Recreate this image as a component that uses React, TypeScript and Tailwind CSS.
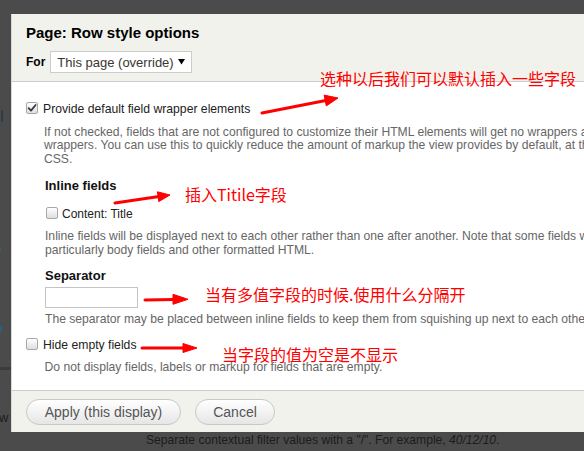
import React from "react";

function Checkbox({ checked }: { checked?: boolean }) {
  return (
    <div className="w-[12px] h-[12px] shrink-0 rounded-[2px] border border-[#a8a8a8] bg-gradient-to-b from-[#ffffff] to-[#dedede] flex items-center justify-center">
      {checked && (
        <svg width="10" height="10" viewBox="0 0 10 10">
          <path d="M1.6 5.2 L4 7.6 L8.6 2" fill="none" stroke="#3a3a3a" strokeWidth="1.8" strokeLinecap="round" strokeLinejoin="round" />
        </svg>
      )}
    </div>
  );
}

export default function App() {
  return (
    <div className="relative w-[584px] h-[451px] overflow-hidden bg-[#4b4b4b] font-['Liberation_Sans',Arial,sans-serif]">
      {/* background page fragments */}
      <div className="absolute left-[1px] top-[110px] w-[2px] h-[12px] bg-[#2e3a44]" />
      <div className="absolute left-0 top-[248px] w-[1px] h-[4px] bg-[#2f5d7a]" />
      <div className="absolute left-0 top-[325px] w-[2px] h-[8px] rounded-r bg-[#2f5d7a]" />
      <div className="absolute left-0 top-[367px] w-[11px] h-[3px] bg-[#3c3c3c]" />
      <div className="absolute left-[-1px] top-[410px] text-[13px] leading-[15px] text-[#1c1c1c]">w</div>
      <div className="absolute left-[146px] top-[433px] text-[12.1px] leading-[15px] text-[#1c1c1c] whitespace-nowrap">
        Separate contextual filter values with a "/". For example, <i>40/12/10</i>.
      </div>

      {/* dialog */}
      <div className="absolute left-[11px] top-[14px] w-[620px] h-[418px] flex flex-col bg-white border-l border-[#d8d8d8]">
        <div className="h-[68px] shrink-0 bg-[#f2f2ed] border-b border-[#cccccc] pl-[14px] pt-[10px]">
          <div className="text-[15px] font-bold leading-[18px] text-[#000]">Page: Row style options</div>
          <div className="mt-[9px] flex items-center h-[22px]">
            <span className="text-[12px] font-bold leading-[14px] text-[#000]">For</span>
            <div className="ml-[5px] w-[142px] h-[22px] border border-[#cccccc] bg-white pl-[6px] pr-[6px] flex items-center justify-between">
              <span className="text-[13px] leading-[15px] text-[#3a3530]">This page (override)</span>
              <svg width="7" height="6" viewBox="0 0 7 6">
                <path d="M0 0 L7 0 L3.5 5.5 Z" fill="#000" />
              </svg>
            </div>
          </div>
        </div>

        <div className="flex-1 px-[14px] pt-[20px] overflow-hidden">
          <div className="flex items-start">
            <Checkbox checked />
            <span className="ml-[5px] text-[12.2px] leading-[15px] text-[#222] whitespace-nowrap">Provide default field wrapper elements</span>
          </div>
          <div className="mt-[9px] ml-[18px] text-[12.15px] leading-[13.3px] text-[#666] whitespace-nowrap">
            If not checked, fields that are not configured to customize their HTML elements will get no wrappers at all for their field, label and field + label
            <br />
            wrappers. You can use this to quickly reduce the amount of markup the view provides by default, at the cost of making it more difficult to apply
            <br />
            CSS.
          </div>

          <div className="ml-[19px] mt-[12px]">
            <div className="text-[13px] font-bold leading-[16px] text-[#111]">Inline fields</div>
            <div className="mt-[13.5px] ml-[1px] flex items-start">
              <Checkbox />
              <span className="ml-[4px] text-[12px] leading-[15px] text-[#222] whitespace-nowrap">Content: Title</span>
            </div>
            <div className="mt-[7px] text-[12.15px] leading-[14px] text-[#666] whitespace-nowrap">
              Inline fields will be displayed next to each other rather than one after another. Note that some fields will ignore this if they are block elements,
              <br />
              particularly body fields and other formatted HTML.
            </div>
            <div className="mt-[11px] text-[13px] font-bold leading-[16px] text-[#111]">Separator</div>
            <div className="mt-[2.5px] w-[93px] h-[21px] border border-[#c4c4c4] bg-white" />
            <div className="mt-[4px] text-[12.15px] leading-[14px] text-[#666] whitespace-nowrap">
              The separator may be placed between inline fields to keep them from squishing up next to each other. You can use HTML in this field.
            </div>
          </div>

          <div className="mt-[12.5px] flex items-start">
            <Checkbox />
            <span className="ml-[5px] text-[12.2px] leading-[15px] text-[#222] whitespace-nowrap">Hide empty fields</span>
          </div>
          <div className="mt-[7px] ml-[18.5px] text-[12.15px] leading-[14px] text-[#666] whitespace-nowrap">
            Do not display fields, labels or markup for fields that are empty.
          </div>
        </div>

        <div className="h-[42px] shrink-0 border-t border-[#cccccc] bg-[#f2f2ed] flex items-start pt-[8px] pl-[14px] gap-[14px]">
          <button className="w-[155px] h-[26px] rounded-full border border-[#c8c8c8] bg-gradient-to-b from-[#ffffff] to-[#e6e6e6] text-[14px] leading-[16px] text-[#555]">
            Apply (this display)
          </button>
          <button className="w-[80px] h-[26px] rounded-full border border-[#c8c8c8] bg-gradient-to-b from-[#ffffff] to-[#e6e6e6] text-[14px] leading-[16px] text-[#555]">
            Cancel
          </button>
        </div>
      </div>

      {/* annotations */}
      <svg className="absolute left-0 top-0 pointer-events-none" width="584" height="451" viewBox="0 0 584 451">
        <g fill="#ff0000" stroke="#ff0000">
          <line x1="262" y1="113" x2="327" y2="100.3" strokeWidth="3" strokeLinecap="round" />
          <polygon points="338,98 326.3,105.9 324.1,95.1" strokeWidth="1" />
          <line x1="115" y1="203" x2="159" y2="196.6" strokeWidth="3" strokeLinecap="round" />
          <polygon points="170,195 158.8,201.6 157.4,191.8" strokeWidth="1" />
          <line x1="145" y1="300" x2="174" y2="299.5" strokeWidth="3" strokeLinecap="round" />
          <polygon points="188,299.3 173,304.3 173,294.3" strokeWidth="1" />
          <line x1="142" y1="348" x2="184" y2="348" strokeWidth="3" strokeLinecap="round" />
          <polygon points="197,348 183,352.5 183,343.5" strokeWidth="1" />
        </g>
      </svg>
      <div className="absolute left-[320px] top-[70px] text-[16px] leading-[16px] text-[#ff0000] whitespace-nowrap font-['Noto_Sans_CJK_SC',sans-serif]">选种以后我们可以默认插入一些字段</div>
      <div className="absolute left-[185px] top-[186px] text-[16px] leading-[16px] text-[#ff0000] whitespace-nowrap font-['Noto_Sans_CJK_SC',sans-serif]">插入Titile字段</div>
      <div className="absolute left-[205px] top-[286px] text-[16px] leading-[16px] text-[#ff0000] whitespace-nowrap font-['Noto_Sans_CJK_SC',sans-serif]">当有多值字段的时候.使用什么分隔开</div>
      <div className="absolute left-[222px] top-[346px] text-[16px] leading-[16px] text-[#ff0000] whitespace-nowrap font-['Noto_Sans_CJK_SC',sans-serif]">当字段的值为空是不显示</div>
    </div>
  );
}
